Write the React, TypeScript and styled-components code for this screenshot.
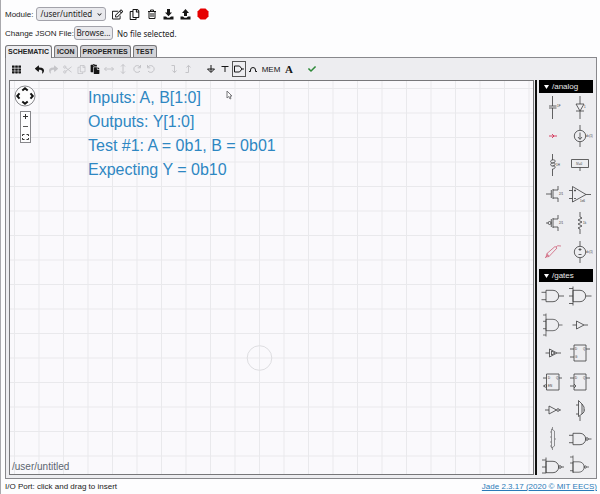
import React from "react";
import styled, { createGlobalStyle } from "styled-components";
import {
  FaRegEdit, FaRegCopy, FaTh, FaReply, FaShare, FaPaste, FaCheck, FaChevronDown,
} from "react-icons/fa";

const GlobalStyle = createGlobalStyle`
  * { box-sizing: border-box; }
  body { margin: 0; background: #fdfdfe; color: #222; font-family: "Liberation Sans", Arial, sans-serif; font-size: 8px; }
  button { font: inherit; color: inherit; }
`;

const Page = styled.div`
  height: 100vh;
  display: flex;
  flex-direction: column;
  padding: 5px 3px 0 4px;
  border-left: 1px solid #a9a9ad;
`;

const ModuleRow = styled.div`
  flex: none;
  display: flex;
  align-items: center;
  height: 18px;
  gap: 3px;
`;

const SelectBox = styled.span`
  position: relative;
  display: inline-flex;
  align-items: center;
  svg { position: absolute; right: 4px; width: 5px; height: 5px; pointer-events: none; }
`;

const ModuleSelect = styled.select`
  appearance: none;
  width: 70px;
  height: 14px;
  padding: 0 3px;
  border: 1px solid #a2a2aa;
  border-radius: 3px;
  background: #e9e9ed;
  color: #222;
  font: 8px/12px "Noto Sans", sans-serif;
`;

const ModuleActions = styled.div`
  display: flex;
`;

const Tool = styled.button<{ $w?: number; $active?: boolean; $dim?: boolean; $tone?: string }>`
  width: ${(p) => p.$w ?? 14}px;
  height: 16px;
  flex: none;
  display: inline-flex;
  align-items: center;
  justify-content: center;
  padding: 0;
  background: none;
  border: 1px solid ${(p) => (p.$active ? "#555" : "transparent")};
  color: ${(p) => p.$tone ?? (p.$dim ? "#c4c4c8" : "#161616")};
  svg { flex: none; }
`;

const FileRow = styled.div`
  flex: none;
  display: flex;
  align-items: center;
  height: 20px;
`;

const FileInput = styled.input`
  position: absolute;
  width: 1px;
  height: 1px;
  opacity: 0;
`;

const Browse = styled.label`
  margin-right: 4px;
  width: 39px;
  height: 14px;
  line-height: 12px;
  text-align: center;
  border: 1px solid #a2a2aa;
  border-radius: 3px;
  background: #e9e9ed;
  font-family: "Noto Sans", sans-serif;
  font-size: 8px;
`;

const FileName = styled.span`
  font-family: "Noto Sans", sans-serif;
  font-size: 8px;
`;

const Tabs = styled.div`
  flex: none;
  display: flex;
  align-items: flex-end;
  gap: 2px;
  height: 14px;
  padding-top: 2px;
`;

const Tab = styled.button<{ $active?: boolean }>`
  position: relative;
  height: ${(p) => (p.$active ? 13 : 12)}px;
  margin-bottom: ${(p) => (p.$active ? -1 : 0)}px;
  padding: 0 2px;
  border: 1px solid #77777a;
  border-bottom: 0;
  border-radius: 3px 3px 0 0;
  background: ${(p) => (p.$active ? "#ededf0" : "#d3d3d7")};
  font-weight: 700;
  font-size: 7px;
  line-height: 10px;
`;

const Workspace = styled.main`
  flex: 1;
  min-height: 0;
  display: flex;
  flex-direction: column;
  border: 1px solid #88888c;
  background: #ededf0;
  padding: 0 3px 3px;
`;

const Toolbar = styled.div`
  flex: none;
  display: flex;
  align-items: center;
  height: 22px;
`;

const Group = styled.div`
  display: flex;
  margin-right: 9px;
`;

const Editor = styled.div`
  flex: 1;
  min-height: 0;
  display: flex;
`;

const Canvas = styled.section`
  position: relative;
  flex: 1;
  border: 1px solid #77777a;
  background: #faf9fc;
  overflow: hidden;
  display: flex;
  flex-direction: column;
  justify-content: space-between;
`;

const GridDrawing = styled.svg`
  position: absolute;
  inset: 0;
  width: 100%;
  height: 100%;
`;

const CanvasTop = styled.div`
  position: relative;
  display: flex;
  padding: 4px 0 0 4px;
`;

const NavColumn = styled.div`
  width: 22px;
  display: flex;
  flex-direction: column;
  align-items: center;
  gap: 4px;
`;

const PanButton = styled.button`
  width: 22px;
  height: 22px;
  padding: 0;
  border: 0;
  background: none;
  svg { display: block; }
`;

const ZoomBox = styled.div`
  width: 11px;
  border: 1px solid #88888c;
  background: #fdfdfe;
  display: flex;
  flex-direction: column;
`;

const ZoomButton = styled.button`
  height: 10px;
  padding: 0;
  border: 0;
  background: none;
  svg { display: block; }
`;

const Notes = styled.div`
  padding: 1px 0 0 52px;
  color: #2e87c2;
  font-size: 16px;
  line-height: 24px;
  p { margin: 0; white-space: nowrap; }
`;

const CanvasPath = styled.div`
  position: relative;
  padding: 0 2px;
  color: #5c6670;
  font-size: 10px;
  line-height: 14px;
`;

const Pointer = styled.svg`
  position: absolute;
  left: 216px;
  top: 9px;
`;

const Splitter = styled.div`
  flex: none;
  width: 2px;
  margin: 0 2px 0 1px;
  background: #111;
`;

const Parts = styled.aside`
  flex: none;
  width: 54px;
  overflow: hidden;
  display: flex;
  flex-direction: column;
`;

const PartsHeader = styled.button`
  flex: none;
  display: flex;
  align-items: center;
  gap: 3px;
  height: 13px;
  padding: 0 5px;
  border: 0;
  background: #000;
  color: #e8e8e8;
  font-size: 8px;
`;

const PartsGrid = styled.div<{ $rows: string }>`
  flex: none;
  display: grid;
  grid-template-columns: 27px 27px;
  grid-template-rows: ${(p) => p.$rows};
`;

const PartButton = styled.button`
  padding: 0;
  border: 0;
  background: none;
  display: flex;
  svg { overflow: visible; display: block; }
`;

const Footer = styled.footer`
  flex: none;
  display: flex;
  justify-content: space-between;
  align-items: center;
  height: 15px;
  a { color: #2a7ab8; }
`;

const Line = ({ children, size = 10 }: { children: React.ReactNode; size?: number }) => (
  <svg width={size} height={size} viewBox="0 0 10 10" fill="none" stroke="currentColor">
    {children}
  </svg>
);

const Trash = () => (
  <Line><path d="M1 2.5H9M3.5 2.5V1H6.5V2.5M2 2.5V9.5H8V2.5M4 4V8M6 4V8" /></Line>
);
const Transfer = ({ up }: { up?: boolean }) => (
  <svg width="11" height="11" viewBox="0 0 11 11" fill="currentColor">
    <path d={up ? "M5.5 0L9 4H7V7H4V4H2Z" : "M4 0H7V3.5H9L5.5 7.2L2 3.5H4Z"} />
    <path d="M.5 7.5H3L4.5 8.7H6.5L8 7.5H10.5V10.5H.5Z" />
  </svg>
);
const Stop = () => (
  <svg width="12" height="12" viewBox="0 0 12 12" fill="#e60000"><path d="M3.5.5H8.5L11.5 3.5V8.5L8.5 11.5H3.5L.5 8.5V3.5Z" /></svg>
);
const Cut = () => (
  <Line size={9}><circle cx="2" cy="2.3" r="1.3" /><circle cx="2" cy="7.7" r="1.3" /><path d="M3 3L9.5 8M3 7L9.5 2" /></Line>
);

const G = ({ children, color = "#3c3c3e" }: { children: React.ReactNode; color?: string }) => (
  <svg width="27" height="28" viewBox="-14 -14 27 28" fill="none" stroke={color} strokeWidth=".8">{children}</svg>
);
const Label = ({ x, y, children }: { x: number; y: number; children: string }) => (
  <text x={x} y={y} fontSize="3" fill="#333" stroke="none">{children}</text>
);

const AND = "M-7-5.7H0A5.7 5.7 0 0 1 0 5.7H-7Z";
const analog: [string, React.ReactNode][] = [
  ["capacitor", <G><path d="M-.5-11V-1M-4-1H3.5M-4 1H3.5M-.5 1V12" /><Label x={4} y={0}>1F</Label></G>],
  ["diode", <G><path d="M0-11V-3M-4-3H4L0 4ZM-4 4H4M0 4V12" /><Label x={4} y={1}>1</Label></G>],
  ["jumper", <G color="#d02048"><path d="M-4 0H4M-1-2L1 0L-1 2" /></G>],
  ["current source", <G><circle r="5.7" /><path d="M0-11V-5.7M0 5.7V11M0-3.5V3M-2 1L0 3.5L2 1" /><Label x={6} y={1}>dc(1)</Label></G>],
  ["inductor", <G><path d="M-.5-11V-5C3-6 3-2-.5-2C3-3 3 1-.5 1C3 0 3 4-.5 4V11M-.5-5C-3-5-3-2-.5-2M-.5-2C-3-2-3 1-.5 1" /><Label x={3} y={1}>1H</Label></G>],
  ["initial voltage", <G><path d="M-8.5-5.5H8.5V2.5H-8.5ZM0 2.5V6" /><Label x={-4} y={0}>IV=0</Label></G>],
  ["nfet", <G><path d="M-7 0H-1.7M-1.7-4V4M0-5V5M0-4H5V-8M0 4H5V8" /><Label x={6} y={1}>2/1</Label></G>],
  ["opamp", <G><path d="M-7.5-7.5V8L6 .5ZM6 .5H11M-11-3.5H-7.5M-11 4.5H-7.5M-6-3.5H-4M-5-4.5V-2.5M-6 4.5H-4" /><Label x={0} y={8}>1e6</Label></G>],
  ["pfet", <G><path d="M-7 0H-5M-1.7-4V4M0-5V5M0-4H5V-8M0 4H5V8" /><circle cx="-3.4" r="1.5" /><Label x={6} y={1}>2/1</Label></G>],
  ["resistor", <G><path d="M0-11V-6L2-5L-2-3L2-1L-2 1L2 3L-2 5L0 6V11" /><Label x={3} y={1}>1k</Label></G>],
  ["voltage probe", <G color="#cf6078"><path d="M-8 6L-5 3M-6 1.5L2-5.5L4-4L-4 4.5ZM-6 1.5L-7 5L-4 4.5M3-5Q4-7 8-6" /></G>],
  ["voltage source", <G><circle r="5.7" /><path d="M0-11V-5.7M0 5.7V11M-1.5-2.5H1.5M0-4V-1M-1.5 2.5H1.5" /><Label x={6} y={1}>dc(1)</Label></G>],
];

const gates: [string, React.ReactNode][] = [
  ["and2", <G><path d={`${AND}M-11.5-3.7H-7M-11.5 3.7H-7M5.7 0H11`} /></G>],
  ["and3", <G><path d={`${AND}M-11-7.5H-7M-11 0H-7M-11 7.5H-7M-7-9.5V9.5M5.7 0H11.5`} /></G>],
  ["and4", <G><path d={`${AND}M-10-10H-7M-10-3.7H-7M-10 3.7H-7M-10 10H-7M-7-11.5V11.5M5.7 0H9.5`} strokeWidth=".7" /></G>],
  ["buffer", <G><path d="M-7.5 0H-3.5M-3.5-4V4L4 0ZM4 0H8" /></G>],
  ["big buffer", <G><path d="M-7.5 0H-3.5M-3.5-4V4L4 0ZM4 0H8M-1.5-2V2L2 0Z" /></G>],
  ["latch", <G><path d="M-6-8H6V8H-6ZM-10-4H-6M-10 4H-6M6-4H10" /><Label x={-5} y={-3}>D</Label><Label x={3} y={-3}>Q</Label><Label x={-5} y={5}>G</Label></G>],
  ["enabled register", <G><path d="M-6.5-8H6V8H-6.5ZM-10-4H-6.5M-10 4H-9M6-4H9" /><circle cx="-7.5" cy="4" r="1.2" /><Label x={-5} y={-3}>D</Label><Label x={3} y={-3}>Q</Label><Label x={-5} y={5}>EN</Label></G>],
  ["register", <G><path d="M-6-8H6V8H-6ZM-10-4H-6M-10 4H-6M6-4H10M-6 2L-4 4L-6 6" /><Label x={-5} y={-3}>D</Label><Label x={3} y={-3}>Q</Label></G>],
  ["inverter", <G><path d="M-8 0H-4M-4-4V4L3.5 0ZM6 0H8" /><circle cx="5" r="1.3" /></G>],
  ["mux2", <G><path d="M-1.5-9.5L2-6V4L-1.5 6.5ZM-4-5H-1.5M-4 4H-1.5M2-6L4-3V2L2 4M4 0H5M0 6V11" /></G>],
  ["mux4", <G color="#77777a"><path d="M-.5-12V-9M-.5 8V11M-1.5-10L1.5-8V7L-1.5 9ZM-3-7H-1.5M-3-2H-1.5M-3 3H-1.5M-3 7H-1.5M1.5 0H3" /></G>],
  ["nand2", <G><path d={`${AND}M-11-3.7H-7M-11 3.7H-7M8.3 0H11.5`} /><circle cx="7" r="1.3" /></G>],
  ["nand3", <G><path d={`${AND}M-11-7H-7M-11 0H-7M-11 6H-7M-7-9.5V6M8.3 0H11`} /><circle cx="7" r="1.3" /></G>],
  ["nand4", <G><path d="M-7-5.2H-1A5.2 5.2 0 0 1-1 5.2H-7ZM-10-10H-7M-10-4H-7M-10 3.7H-7M-7-11.5V6M6.5 0H9" strokeWidth=".7" /><circle cx="5.3" r="1.1" /></G>],
];

const PartsSection = ({ name, rows, parts }: { name: string; rows: string; parts: [string, React.ReactNode][] }) => (
  <>
    <PartsHeader>
      <svg width="5" height="4" viewBox="0 0 5 4" fill="#fff"><path d="M0 0H5L2.5 4Z" /></svg>
      {name}
    </PartsHeader>
    <PartsGrid $rows={rows}>
      {parts.map(([label, icon]) => <PartButton key={label} aria-label={label}>{icon}</PartButton>)}
    </PartsGrid>
  </>
);

export default function App() {
  return (
    <Page>
      <GlobalStyle />
      <ModuleRow>
        <label htmlFor="module">Module:</label>
        <SelectBox>
          <ModuleSelect id="module"><option>/user/untitled</option></ModuleSelect>
          <FaChevronDown />
        </SelectBox>
        <ModuleActions>
          <Tool $w={17} aria-label="Edit module"><FaRegEdit size={11} /></Tool>
          <Tool $w={17} aria-label="Copy module"><FaRegCopy size={11} /></Tool>
          <Tool $w={17} aria-label="Delete module"><Trash /></Tool>
          <Tool $w={17} aria-label="Download"><Transfer /></Tool>
          <Tool $w={17} aria-label="Upload"><Transfer up /></Tool>
          <Tool $w={17} aria-label="Stop"><Stop /></Tool>
        </ModuleActions>
      </ModuleRow>
      <FileRow>
        <span>Change JSON File:</span>
        <FileInput type="file" id="json-file" aria-label="Change JSON File" />
        <Browse htmlFor="json-file">Browse...</Browse>
        <FileName>No file selected.</FileName>
      </FileRow>
      <Tabs role="tablist">
        <Tab role="tab" $active aria-selected>SCHEMATIC</Tab>
        <Tab role="tab">ICON</Tab>
        <Tab role="tab">PROPERTIES</Tab>
        <Tab role="tab">TEST</Tab>
      </Tabs>
      <Workspace>
        <Toolbar>
          <Group><Tool aria-label="Grid"><FaTh size={9} /></Tool></Group>
          <Group>
            <Tool aria-label="Undo"><FaReply size={9} /></Tool>
            <Tool $dim aria-label="Redo"><FaShare size={9} /></Tool>
            <Tool $dim aria-label="Cut"><Cut /></Tool>
            <Tool $dim aria-label="Copy"><FaRegCopy size={9} /></Tool>
            <Tool aria-label="Paste"><FaPaste size={10} /></Tool>
            <Tool $dim aria-label="Flip horizontally"><Line><path d="M.5 5H9.5M2.5 3L.5 5L2.5 7M7.5 3L9.5 5L7.5 7" /></Line></Tool>
            <Tool $dim aria-label="Flip vertically"><Line><path d="M5 .5V9.5M3 2.5L5 .5L7 2.5M3 7.5L5 9.5L7 7.5" /></Line></Tool>
            <Tool $dim aria-label="Rotate right"><Line><path d="M8 3A3.4 3.4 0 1 0 8 7M8.5 1V3.8H5.7" /></Line></Tool>
            <Tool $dim aria-label="Rotate left"><Line><path d="M2 3A3.4 3.4 0 1 1 2 7M1.5 1V3.8H4.3" /></Line></Tool>
          </Group>
          <Group>
            <Tool $dim aria-label="Down a level"><Line><path d="M2.5 1.5H5.5V8.5M3.5 6.5L5.5 8.7L7.5 6.5" /></Line></Tool>
            <Tool $dim aria-label="Up a level"><Line><path d="M2.5 8.5H5.5V1.5M3.5 3.5L5.5 1.3L7.5 3.5" /></Line></Tool>
          </Group>
          <Group>
            <Tool aria-label="Ground"><Line><path d="M5 1V8M1.5 5H8.5L5 8.5Z" /></Line></Tool>
            <Tool aria-label="Vdd"><Line><path d="M1.5 2.5H8.5M5 2.5V8" /></Line></Tool>
            <Tool $active aria-label="I/O port"><Line><path d="M.5 2H5.5L8 5L5.5 8H.5ZM8 5H10" /></Line></Tool>
            <Tool aria-label="Jumper"><Line><path d="M1 7.5H2.5V6A2.5 2.5 0 0 1 7.5 6V7.5H9" /></Line></Tool>
            <Tool $w={22}>MEM</Tool>
            <Tool aria-label="Text">
              <svg width="12" height="12" viewBox="0 0 12 12"><text x="6" y="10" textAnchor="middle" fontFamily="Liberation Serif, serif" fontWeight="700" fontSize="11" fill="currentColor">A</text></svg>
            </Tool>
          </Group>
          <Tool $tone="#2f8a3a" aria-label="Check"><FaCheck size={8} /></Tool>
        </Toolbar>
        <Editor>
          <Canvas>
            <GridDrawing>
              <defs>
                <pattern id="grid" x="249" y="276.5" width="24.5" height="24.5" patternUnits="userSpaceOnUse">
                  <path d="M.5 0V24.5M0 .5H24.5" stroke="#e9e9ec" fill="none" />
                </pattern>
              </defs>
              <rect width="100%" height="100%" fill="url(#grid)" />
              <circle cx="249.5" cy="277" r="12.3" fill="none" stroke="#dedee1" />
            </GridDrawing>
            <CanvasTop>
              <NavColumn>
                <PanButton aria-label="Pan">
                  <svg width="22" height="22" viewBox="0 0 22 22" fill="none" stroke="#111" strokeWidth="2">
                    <circle cx="11" cy="11" r="10" fill="#fdfdfe" stroke="#88888c" strokeWidth="1" />
                    <path d="M8.3 5.5L11 3.2L13.7 5.5M8.3 16.5L11 18.8L13.7 16.5M5.5 8.3L3.2 11L5.5 13.7M16.5 8.3L18.8 11L16.5 13.7" />
                  </svg>
                </PanButton>
                <ZoomBox>
                  <ZoomButton aria-label="Zoom in"><svg width="9" height="10" stroke="#333"><path d="M2 4.5H7M4.5 2V7" /></svg></ZoomButton>
                  <ZoomButton aria-label="Zoom out"><svg width="9" height="10" stroke="#555"><path d="M2 4.5H7" /></svg></ZoomButton>
                  <ZoomButton aria-label="Fit"><svg width="9" height="10" stroke="#333" fill="none"><path d="M1.5 4V2.5H3.5M5.5 2.5H7.5V4M7.5 6V7.5H5.5M3.5 7.5H1.5V6" /></svg></ZoomButton>
                </ZoomBox>
              </NavColumn>
              <Notes>
                <p>Inputs: A, B[1:0]</p>
                <p>Outputs: Y[1:0]</p>
                <p>Test #1: A = 0b1, B = 0b01</p>
                <p>Expecting Y = 0b10</p>
              </Notes>
            </CanvasTop>
            <CanvasPath>/user/untitled</CanvasPath>
            <Pointer width="7" height="10" viewBox="0 0 7 10" fill="#fff" stroke="#77777a"><path d="M1 1V8L2.7 6.5L4 9L5 8.5L4 6H6Z" /></Pointer>
          </Canvas>
          <Splitter />
          <Parts>
            <PartsSection name="/analog" rows="repeat(6, 29px) 2px" parts={analog} />
            <PartsSection name="/gates" rows="repeat(3, 29px 28px) 28px" parts={gates} />
          </Parts>
        </Editor>
      </Workspace>
      <Footer>
        <span>I/O Port: click and drag to insert</span>
        <a href="#about">Jade 2.3.17 (2020 © MIT EECS)</a>
      </Footer>
    </Page>
  );
}
